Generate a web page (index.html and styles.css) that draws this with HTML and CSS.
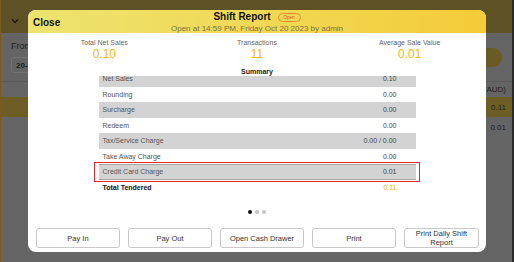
FILE: index.html
```html
<!DOCTYPE html>
<html>
<head>
<meta charset="utf-8">
<link rel="stylesheet" href="styles.css">
</head>
<body>
<div class="app">
  <div class="topbar">
    <svg class="chev" width="8" height="6" viewBox="0 0 8 6"><path d="M1 1.2 L4 4.4 L7 1.2" fill="none" stroke="#1d1a10" stroke-width="1.4"/></svg>
  </div>
  <div class="filters">
    <div class="from">
      <div class="from-label">From</div>
      <div class="from-box">20-10</div>
    </div>
    <div class="pill"></div>
  </div>
  <div class="thead">(AUD)</div>
  <div class="trow hl">0.11</div>
  <div class="trow">0.01</div>
</div>

<div class="modal">
  <div class="header">
    <div class="close">Close</div>
    <div class="title-wrap">
      <div class="title-line"><span class="title">Shift Report</span><span class="badge">Open</span></div>
      <div class="subtitle">Open at 14:59 PM, Friday Oct 20 2023 by admin</div>
    </div>
    <div></div>
  </div>
  <div class="stats">
    <div class="stat"><div class="stat-label">Total Net Sales</div><div class="stat-value">0.10</div></div>
    <div class="stat"><div class="stat-label">Transactions</div><div class="stat-value">11</div></div>
    <div class="stat"><div class="stat-label">Average Sale Value</div><div class="stat-value">0.01</div></div>
  </div>
  <div class="summary-title">Summary</div>
  <div class="window">
    <div class="list">
      <div class="row gray"><span>Net Sales</span><span class="v">0.10</span></div>
      <div class="row"><span>Rounding</span><span class="v">0.00</span></div>
      <div class="row gray"><span>Surcharge</span><span class="v">0.00</span></div>
      <div class="row"><span>Redeem</span><span class="v">0.00</span></div>
      <div class="row gray"><span>Tax/Service Charge</span><span class="v">0.00 / 0.00</span></div>
      <div class="row"><span>Take Away Charge</span><span class="v">0.00</span></div>
      <div class="row gray marked"><span>Credit Card Charge</span><span class="v">0.01</span></div>
      <div class="row total"><span>Total Tendered</span><span class="tv">0.11</span></div>
    </div>
  </div>
  <div class="dots"><span class="dot on"></span><span class="dot"></span><span class="dot"></span></div>
  <div class="buttons">
    <div class="btn">Pay In</div>
    <div class="btn">Pay Out</div>
    <div class="btn">Open Cash Drawer</div>
    <div class="btn">Print</div>
    <div class="btn last">Print Daily Shift<br>Report</div>
  </div>
</div>
</body>
</html>
```

FILE: styles.css
```css
* { box-sizing: border-box; }
html, body {
  margin: 0;
  padding: 0;
}
body {
  width: 514px;
  height: 262px;
  overflow: hidden;
  background: #646464;
  font-family: "Liberation Sans", Arial, sans-serif;
  position: relative;
}
.app {
  height: 262px;
  border-left: 1px solid #7a5a20;
  border-right: 2px solid #2a2a2a;
  background: #646464;
}
.topbar {
  height: 33px;
  background: #5e5126;
  padding: 18px 0 0 10px;
}
.chev { display: block; }
.filters {
  height: 49px;
  display: flex;
  justify-content: space-between;
  border-bottom: 1px solid #5a5a5a;
  padding: 0 10px 0 10px;
}
.from-label {
  font-size: 9px;
  color: #1e1e1e;
  margin-top: 8px;
  line-height: 10px;
}
.from-box {
  margin-top: 6px;
  width: 70px;
  height: 16px;
  border: 1px solid #727272;
  border-radius: 3px;
  font-size: 8px;
  font-weight: bold;
  color: #1e1e1e;
  padding: 3px 4px;
}
.pill {
  margin-top: 15px;
  width: 60px;
  height: 19px;
  border-radius: 10px;
  background: #6a5b22;
}
.thead, .trow {
  height: 18px;
  font-size: 8px;
  color: #1e1e1e;
  text-align: right;
  padding: 5px 6px 0 0;
}
.thead { height: 15px; padding-top: 3px; }
.trow { height: 20px; padding-top: 6px; }
.trow.hl { background: #6c5e24; }

.modal {
  position: absolute;
  left: 28px;
  top: 10px;
  width: 458px;
  height: 242px;
  background: #fff;
  border-radius: 8px;
  overflow: hidden;
  display: flex;
  flex-direction: column;
}
.header {
  height: 23px;
  flex: none;
  background: linear-gradient(90deg, #ece370 0%, #f1d955 50%, #f4cb38 100%);
  display: grid;
  grid-template-columns: 1fr auto 1fr;
}
.close {
  font-size: 10px;
  font-weight: bold;
  color: #141414;
  padding: 7px 0 0 5px;
  line-height: 12px;
}
.title-wrap {
  text-align: center;
  padding-top: 1px;
}
.title-line {
  height: 12px;
  display: flex;
  align-items: center;
  justify-content: center;
  gap: 7px;
}
.title {
  font-size: 10px;
  font-weight: bold;
  color: #111;
  line-height: 12px;
}
.badge {
  width: 23px;
  height: 9px;
  border: 1px solid #f0903a;
  border-radius: 5px;
  font-size: 4.5px;
  color: #e4562a;
  line-height: 7px;
  text-align: center;
}
.subtitle {
  font-size: 8px;
  color: #7a7240;
  line-height: 9px;
  margin-top: 1px;
  white-space: nowrap;
}
.stats {
  flex: none;
  height: 28px;
  padding-top: 5px;
  display: grid;
  grid-template-columns: 1fr 1fr 1fr;
  text-align: center;
}
.stat-label {
  font-size: 7px;
  color: #666;
  line-height: 9px;
}
.stat-value {
  font-size: 12px;
  color: #f6b60c;
  line-height: 14px;
}
.summary-title {
  flex: none;
  margin-top: 6px;
  font-size: 7px;
  font-weight: bold;
  color: #222;
  text-align: center;
  line-height: 9px;
}
.window {
  flex: 1;
  overflow: hidden;
  min-height: 0;
}
.list {
  width: 317px;
  margin: -5px auto 0;
}
.row {
  height: 15.5px;
  display: flex;
  justify-content: space-between;
  align-items: center;
  padding: 0 19px 0 4px;
  font-size: 7px;
  color: #555;
  position: relative;
}
.row .v { color: #444; }
.row.gray { background: #d3d3d3; }
.row.marked { box-shadow: inset 0 1px 0 #a8a8a8, inset 0 -1px 0 #a8a8a8; }
.row.marked::after {
  content: "";
  position: absolute;
  left: -5px;
  right: -4px;
  top: -2px;
  bottom: -2px;
  border: 1px solid #e0262e;
}
.row.total { color: #111; font-weight: bold; }
.row.total .tv { color: #f6b60c; font-weight: normal; }
.dots {
  flex: none;
  height: 4px;
  display: flex;
  justify-content: center;
  gap: 3px;
  margin-bottom: 14px;
}
.dot {
  width: 4px;
  height: 4px;
  border-radius: 50%;
  background: #c4c4c4;
}
.dot.on { background: #111; }
.buttons {
  flex: none;
  display: flex;
  gap: 8px;
  padding: 0 7px 4px 8px;
}
.btn {
  width: 84px;
  height: 20px;
  border: 1px solid #c9c9c9;
  border-radius: 3px;
  font-size: 7.5px;
  color: #333;
  display: flex;
  align-items: center;
  justify-content: center;
  text-align: center;
  line-height: 9px;
}
.btn.last { flex: 1; width: auto; }
```
